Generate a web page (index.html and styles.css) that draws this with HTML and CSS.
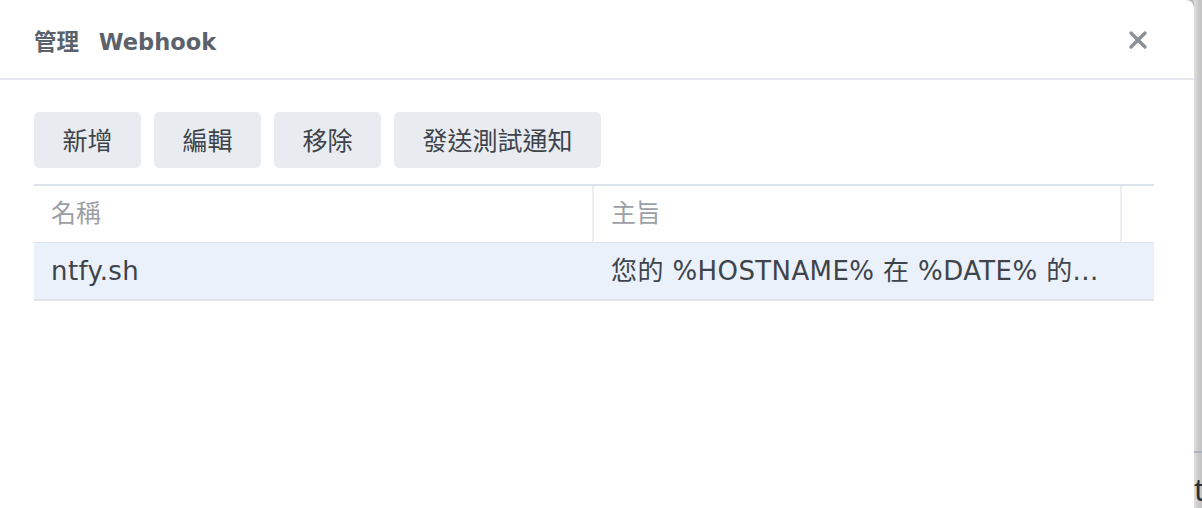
FILE: index.html
```html
<!DOCTYPE html>
<html lang="zh-Hant">
<head>
    <meta charset="UTF-8">
    <meta name="viewport" content="width=device-width, initial-scale=1.0">
    <title>管理 Webhook</title>
    <link rel="stylesheet" href="styles.css">
</head>
<body>
<div class="dialog">
    <!-- Заголовок окна -->
    <div class="dialog-header">
        <div class="dialog-title">管理 Webhook</div>
        <div class="close-btn">
            <svg width="20" height="20" viewBox="0 0 20 20">
                <path d="M3 3 L17 17 M17 3 L3 17" stroke="#8b9096" stroke-width="3.4" stroke-linecap="round"/>
            </svg>
        </div>
    </div>

    <div class="dialog-body">
        <!-- Панель кнопок -->
        <div class="toolbar">
            <button>新增</button>
            <button>編輯</button>
            <button>移除</button>
            <button>發送測試通知</button>
        </div>

        <!-- Таблица -->
        <div class="grid">
            <div class="grid-row grid-head">
                <div class="cell col-name">名稱</div>
                <div class="cell col-subject">主旨</div>
                <div class="col-rest"></div>
            </div>
            <div class="grid-row grid-item">
                <div class="cell col-name">ntfy.sh</div>
                <div class="cell col-subject">您的 %HOSTNAME% 在 %DATE% 的...</div>
                <div class="col-rest"></div>
            </div>
        </div>
    </div>
</div>
<div class="backdrop">
    <div class="backdrop-line"></div>
    <div class="backdrop-text">t</div>
</div>
</body>
</html>
```

FILE: styles.css
```css
:root {
    --color-title: #5b626b;
    --color-text: #3f444b;
    --color-muted: #9ba0a6;
    --color-border: #dfe4ea;
    --color-button-bg: #e8ecf0;
    --color-row-bg: #eaf1fb;
}

body {
    margin: 0;
    padding: 0;
    display: flex;
    height: 508px;
    overflow: hidden;
    background-color: #c8c8c8;
    font-family: "Noto Sans", "Noto Sans CJK TC", sans-serif;
}

.dialog {
    width: 1194px;
    flex: none;
    background-color: #fff;
    border-top-right-radius: 8px;
    box-shadow: 1px 0 4px rgba(0, 0, 0, 0.15);
}

.dialog-header {
    height: 78px;
    border-bottom: 2px solid #e4e7eb;
    display: flex;
    align-items: center;
    justify-content: space-between;
    padding: 0 46px 0 34px;
}

.dialog-title {
    font-family: "DejaVu Sans", "Noto Sans CJK TC", sans-serif;
    font-size: 22.5px;
    font-weight: bold;
    word-spacing: 12px;
    color: var(--color-title);
    margin-top: 1px;
}

.close-btn {
    width: 20px;
    height: 20px;
    margin-top: 2px;
}

.close-btn svg {
    display: block;
}

.dialog-body {
    padding: 32px 40px 0 34px;
}

.toolbar {
    display: flex;
    gap: 13px;
}

button {
    height: 56px;
    padding: 0 28.5px;
    border: none;
    border-radius: 5px;
    background-color: var(--color-button-bg);
    color: var(--color-text);
    font-family: "Noto Sans", "Noto Sans CJK TC", sans-serif;
    font-size: 25px;
    line-height: 56px;
}

.grid {
    margin-top: 16px;
    border-top: 2px solid var(--color-border);
}

.grid-row {
    display: flex;
    height: 56px;
}

.grid-head {
    border-bottom: 1px solid var(--color-border);
    color: var(--color-muted);
}

.grid-item {
    height: 56px;
    background-color: var(--color-row-bg);
    border-bottom: 2px solid var(--color-border);
    color: var(--color-text);
}

.cell {
    flex: none;
    box-sizing: border-box;
    padding: 0 12px 0 17px;
    font-family: "DejaVu Sans", "Noto Sans CJK TC", sans-serif;
    font-size: 25px;
    line-height: 56px;
    white-space: nowrap;
    overflow: hidden;
    text-overflow: ellipsis;
}

.grid-item .cell {
    font-size: 26px;
    letter-spacing: 0.4px;
}

.col-name {
    width: 560px;
}

.col-subject {
    width: 528px;
}

.col-rest {
    flex: 1;
}

.grid-head .col-name,
.grid-head .col-subject {
    border-right: 2px solid #eaedf1;
}

.backdrop {
    flex: 1;
    display: flex;
    flex-direction: column;
    background: linear-gradient(to right, #dedede, #c6c6c6 50%, #c4c4c4);
}

.backdrop-line {
    margin-top: 451px;
    height: 2px;
    background-color: #aab3bf;
}

.backdrop-text {
    margin-top: 22px;
    font-size: 30px;
    line-height: 30px;
    color: #2b3037;
    font-family: "Noto Sans", sans-serif;
}
```
